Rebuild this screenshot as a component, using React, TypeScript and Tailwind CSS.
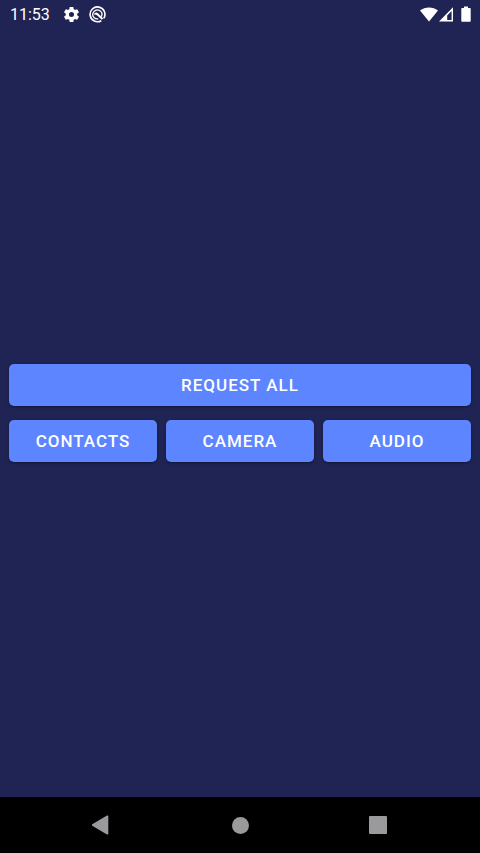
import type { ReactNode } from "react";

function PermissionButton({ children }: { children: ReactNode }) {
  return (
    <button
      type="button"
      className="h-[42px] w-full rounded-[5px] bg-[#5c85ff] pt-0.5 text-[17px] font-medium uppercase tracking-[1px] text-white shadow-[0_1px_3px_rgba(0,0,0,0.4)]"
    >
      {children}
    </button>
  );
}

function StatusBar() {
  return (
    <header className="flex h-7 items-center justify-between px-[9px] text-white">
      <div className="flex items-center">
        <time className="w-[53px] pl-px pt-px text-base leading-7">11:53</time>
        <svg className="size-[19px]" viewBox="0 0 24 24" fill="currentColor" aria-label="Settings">
          <path d="M19.14 12.94c.04-.3.06-.61.06-.94 0-.32-.02-.64-.07-.94l2.03-1.58a.49.49 0 0 0 .12-.61l-1.92-3.32a.49.49 0 0 0-.59-.22l-2.39.96c-.5-.38-1.03-.7-1.62-.94l-.36-2.54a.48.48 0 0 0-.48-.41h-3.84c-.24 0-.43.17-.47.41l-.36 2.54c-.59.24-1.13.57-1.62.94l-2.39-.96a.48.48 0 0 0-.59.22L2.74 8.87c-.12.21-.08.47.12.61l2.03 1.58c-.05.3-.09.63-.09.94s.02.64.07.94l-2.03 1.58a.49.49 0 0 0-.12.61l1.92 3.32c.12.22.37.29.59.22l2.39-.96c.5.38 1.03.7 1.62.94l.36 2.54c.05.24.24.41.48.41h3.84c.24 0 .44-.17.47-.41l.36-2.54c.59-.24 1.13-.56 1.62-.94l2.39.96c.22.08.47 0 .59-.22l1.92-3.32a.48.48 0 0 0-.12-.61l-2.01-1.58zM12 15.2A3.2 3.2 0 1 1 12 8.800a3.200 3.200 0 0 1 0 6.400z" />
        </svg>
        <svg className="ml-2 size-[17px]" viewBox="0 0 17 17" fill="none" stroke="currentColor" aria-label="Notification">
          <path d="M12.300 14.700A7.400 7.400 0 1 1 14.700 12.400" strokeWidth="1.600" />
          <path d="M5.200 11.700A4.500 4.500 0 1 1 12.300 10.700M5.200 11.700Q7 13.400 9.300 12.800" strokeWidth="1.300" />
          <path d="M4.500 8.600Q6.500 5.300 9 7.200L14.200 12.400L12.800 13.800L8.300 9.500Q6.800 8.200 4.500 8.600Z" fill="currentColor" stroke="none" />
        </svg>
      </div>
      <div className="flex items-center">
        <svg className="h-[15px] w-[18px]" viewBox="0 0 18 15" fill="currentColor" aria-label="Wi-Fi">
          <path d="M0 3.500C5 -.5 13 -.5 18 3.500L9 14.500Z" />
        </svg>
        <svg className="ml-px h-[15px] w-[15px]" viewBox="0 0 15 15" aria-label="Mobile signal">
          <path d="M14 .3V14.500H0ZM12.600 4L8.200 8.400V13.100H12.600Z" fill="currentColor" fillRule="evenodd" />
        </svg>
        <svg className="ml-[7px] h-4 w-[10px]" viewBox="0 0 10 16" fill="currentColor" aria-label="Battery">
          <path d="M3 .5H7V2H9Q9.700 2 9.700 2.800V15Q9.700 15.800 9 15.800H1Q.3 15.800 .3 15V2.800Q.3 2 1 2H3Z" />
        </svg>
      </div>
    </header>
  );
}

function NavigationBar() {
  return (
    <nav className="grid h-14 grid-cols-[1fr_80px_1fr] items-center bg-black text-[#9a999b]">
      <button type="button" aria-label="Back" className="flex justify-center">
        <svg className="h-5 w-[18px]" viewBox="0 0 18 20" fill="currentColor">
          <path d="M1.200 9.300L16 .6Q17.300 0 17.300 1.200V18.800Q17.300 20 16 19.400L1.200 10.700Q.5 10 1.200 9.300Z" />
        </svg>
      </button>
      <button type="button" aria-label="Home" className="flex justify-center">
        <span className="size-[17px] rounded-full bg-current" />
      </button>
      <button type="button" aria-label="Recent apps" className="flex justify-center pr-1">
        <span className="size-[18px] rounded-[1px] bg-current" />
      </button>
    </nav>
  );
}

export default function App() {
  return (
    <div className="flex min-h-screen flex-col bg-[#202454] font-[Roboto,sans-serif]">
      <StatusBar />
      <main className="flex flex-1 flex-col justify-center gap-[14px] px-[9px]">
        <PermissionButton>Request all</PermissionButton>
        <div className="grid grid-cols-3 gap-[9px]">
          <PermissionButton>Contacts</PermissionButton>
          <PermissionButton>Camera</PermissionButton>
          <PermissionButton>Audio</PermissionButton>
        </div>
      </main>
      <NavigationBar />
    </div>
  );
}
